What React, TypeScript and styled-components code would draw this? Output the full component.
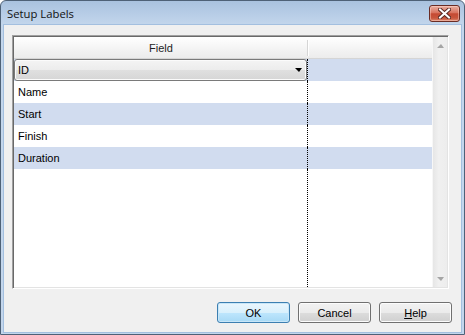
import styled, { createGlobalStyle, css } from "styled-components";

const Global = createGlobalStyle`
  html, body {
    margin: 0;
    padding: 0;
    background: #ffffff;
  }
  body {
    font-family: "Liberation Sans", Arial, sans-serif;
  }
`;

const Frame = styled.div`
  width: 465px;
  height: 335px;
  box-sizing: border-box;
  display: flex;
  flex-direction: column;
  border: 1px solid #4e6177;
  border-radius: 6px 6px 0 0;
  padding: 0 3px 2px 3px;
  background: linear-gradient(to bottom, #a9c2df 0, #c3d6ec 24px, #c3d6ec 100%);
`;

const TitleBar = styled.div`
  height: 24px;
  display: flex;
  align-items: flex-start;
  justify-content: space-between;
  padding-left: 3px;
`;

const Title = styled.span`
  font-family: "Open Sans", "Noto Sans", sans-serif;
  font-size: 11.3px;
  line-height: 25px;
  color: #111111;
`;

const CloseButton = styled.div`
  width: 31px;
  height: 17px;
  box-sizing: border-box;
  margin: 4px 1px 0 0;
  border: 1px solid #6a2c24;
  border-radius: 3px;
  display: flex;
  align-items: center;
  justify-content: center;
  background: linear-gradient(
    to bottom,
    #eab0a2 0%,
    #d9735f 45%,
    #c54a33 52%,
    #c8553c 80%,
    #df8a70 100%
  );
  box-shadow: inset 0 0 0 1px rgba(255, 220, 210, 0.45);
`;

const Client = styled.div`
  flex: 1;
  display: flex;
  flex-direction: column;
  align-items: flex-start;
  background: #f0f0f0;
  padding: 10px 9px 9px 8px;
  box-shadow: 0 0 0 1px #a3bfdf;
`;

const Grid = styled.div`
  width: 437px;
  height: 254px;
  box-sizing: border-box;
  display: flex;
  border: 1px solid;
  border-color: #a0a0a0 #ffffff #ffffff #a0a0a0;
  box-shadow: inset 1px 1px 0 #696969, inset -1px -1px 0 #e3e3e3;
  padding: 1px;
  background: #ffffff;
`;

const Table = styled.div`
  flex: 1;
  display: flex;
  flex-direction: column;
`;

const Header = styled.div`
  height: 22px;
  box-sizing: border-box;
  display: flex;
  background: linear-gradient(to bottom, #ffffff, #f3f3f3 60%, #ececec);
  border-bottom: 1px solid #d5d5d5;
`;

const HeaderCell = styled.div<{ $w: number; $divider?: boolean }>`
  width: ${(p) => p.$w}px;
  position: relative;
  font-size: 11px;
  color: #1e1e1e;
  display: flex;
  align-items: center;
  justify-content: center;
  ${(p) =>
    p.$divider &&
    css`
      &::after {
        content: "";
        position: absolute;
        right: 0;
        top: 3px;
        bottom: 2px;
        width: 1px;
        background: #d5d5d5;
        box-shadow: 1px 0 0 #ffffff;
      }
    `}
`;

const Body = styled.div`
  flex: 1;
  display: flex;
  flex-direction: column;
`;

const Row = styled.div<{ $alt?: boolean; $fill?: boolean }>`
  display: flex;
  height: ${(p) => (p.$fill ? "auto" : "22px")};
  flex: ${(p) => (p.$fill ? 1 : "none")};
  background: ${(p) => (p.$alt ? "#d1dcef" : "#ffffff")};
`;

const FieldCell = styled.div`
  width: 294px;
  box-sizing: border-box;
  border-right: 1px dotted #000000;
  display: flex;
  align-items: center;
  padding-left: 4px;
  font-size: 11px;
  color: #000000;
`;

const ValueCell = styled.div`
  flex: 1;
`;

const Combo = styled.div`
  margin-left: -4px;
  width: 293px;
  height: 22px;
  box-sizing: border-box;
  border: 1px solid #7a7a7a;
  border-radius: 3px;
  display: flex;
  align-items: center;
  justify-content: space-between;
  padding: 0 4px 0 3px;
  background: linear-gradient(
    to bottom,
    #f4f4f4 0%,
    #ececec 50%,
    #e0e0e0 50%,
    #d6d6d6 100%
  );
  box-shadow: inset 0 0 0 1px #fbfbfb;
`;

const Caret = styled.span<{ $color: string; $up?: boolean }>`
  width: 0;
  height: 0;
  border-left: 4px solid transparent;
  border-right: 3px solid transparent;
  ${(p) =>
    p.$up
      ? css`
          border-bottom: 4px solid ${p.$color};
        `
      : css`
          border-top: 4px solid ${p.$color};
        `}
`;

const ScrollBar = styled.div`
  width: 15px;
  display: flex;
  flex-direction: column;
  justify-content: space-between;
  align-items: center;
  padding: 7px 0 6px;
  box-sizing: border-box;
  background: linear-gradient(to right, #e6e6e6, #f0f0f0 40%, #ededed);
  border-left: 1px solid #f7f7f7;
`;

const ButtonRow = styled.div`
  align-self: flex-end;
  display: flex;
  gap: 8px;
  margin-top: 13px;
`;

const Button = styled.div<{ $primary?: boolean }>`
  width: 73px;
  height: 21px;
  box-sizing: border-box;
  border: 1px solid ${(p) => (p.$primary ? "#3c7fb1" : "#707070")};
  border-radius: 3px;
  display: flex;
  align-items: center;
  justify-content: center;
  font-size: 11px;
  color: #000000;
  background: ${(p) =>
    p.$primary
      ? "linear-gradient(to bottom, #eaf6fd 0%, #d9f0fc 50%, #bee6fd 50%, #a7d9f5 100%)"
      : "linear-gradient(to bottom, #f2f2f2 0%, #ebebeb 50%, #dddddd 50%, #cfcfcf 100%)"};
  box-shadow: inset 0 0 0 1px
    ${(p) => (p.$primary ? "#c8e6f8" : "#fcfcfc")};
`;

const rows = [
  { label: "Name", alt: false },
  { label: "Start", alt: true },
  { label: "Finish", alt: false },
  { label: "Duration", alt: true },
];

const App = () => {
  return (
    <>
      <Global />
      <Frame>
        <TitleBar>
          <Title>Setup Labels</Title>
          <CloseButton>
            <svg width="13" height="11" viewBox="0 0 13 11">
              <path
                d="M2 1.5 L11 9.5 M11 1.5 L2 9.5"
                stroke="#5a2a24"
                strokeWidth="4"
                strokeLinecap="square"
              />
              <path
                d="M2 1.5 L11 9.5 M11 1.5 L2 9.5"
                stroke="#ffffff"
                strokeWidth="2"
                strokeLinecap="square"
              />
            </svg>
          </CloseButton>
        </TitleBar>
        <Client>
          <Grid>
            <Table>
              <Header>
                <HeaderCell $w={294} $divider>
                  Field
                </HeaderCell>
                <HeaderCell $w={124} />
              </Header>
              <Body>
                <Row $alt>
                  <FieldCell>
                    <Combo>
                      <span>ID</span>
                      <Caret $color="#000000" />
                    </Combo>
                  </FieldCell>
                  <ValueCell />
                </Row>
                {rows.map((r) => (
                  <Row key={r.label} $alt={r.alt}>
                    <FieldCell>{r.label}</FieldCell>
                    <ValueCell />
                  </Row>
                ))}
                <Row $fill>
                  <FieldCell />
                  <ValueCell />
                </Row>
              </Body>
            </Table>
            <ScrollBar>
              <Caret $color="#a5a5a5" $up />
              <Caret $color="#a5a5a5" />
            </ScrollBar>
          </Grid>
          <ButtonRow>
            <Button $primary>OK</Button>
            <Button>Cancel</Button>
            <Button>
              <span>
                <u>H</u>elp
              </span>
            </Button>
          </ButtonRow>
        </Client>
      </Frame>
    </>
  );
};

export default App;
